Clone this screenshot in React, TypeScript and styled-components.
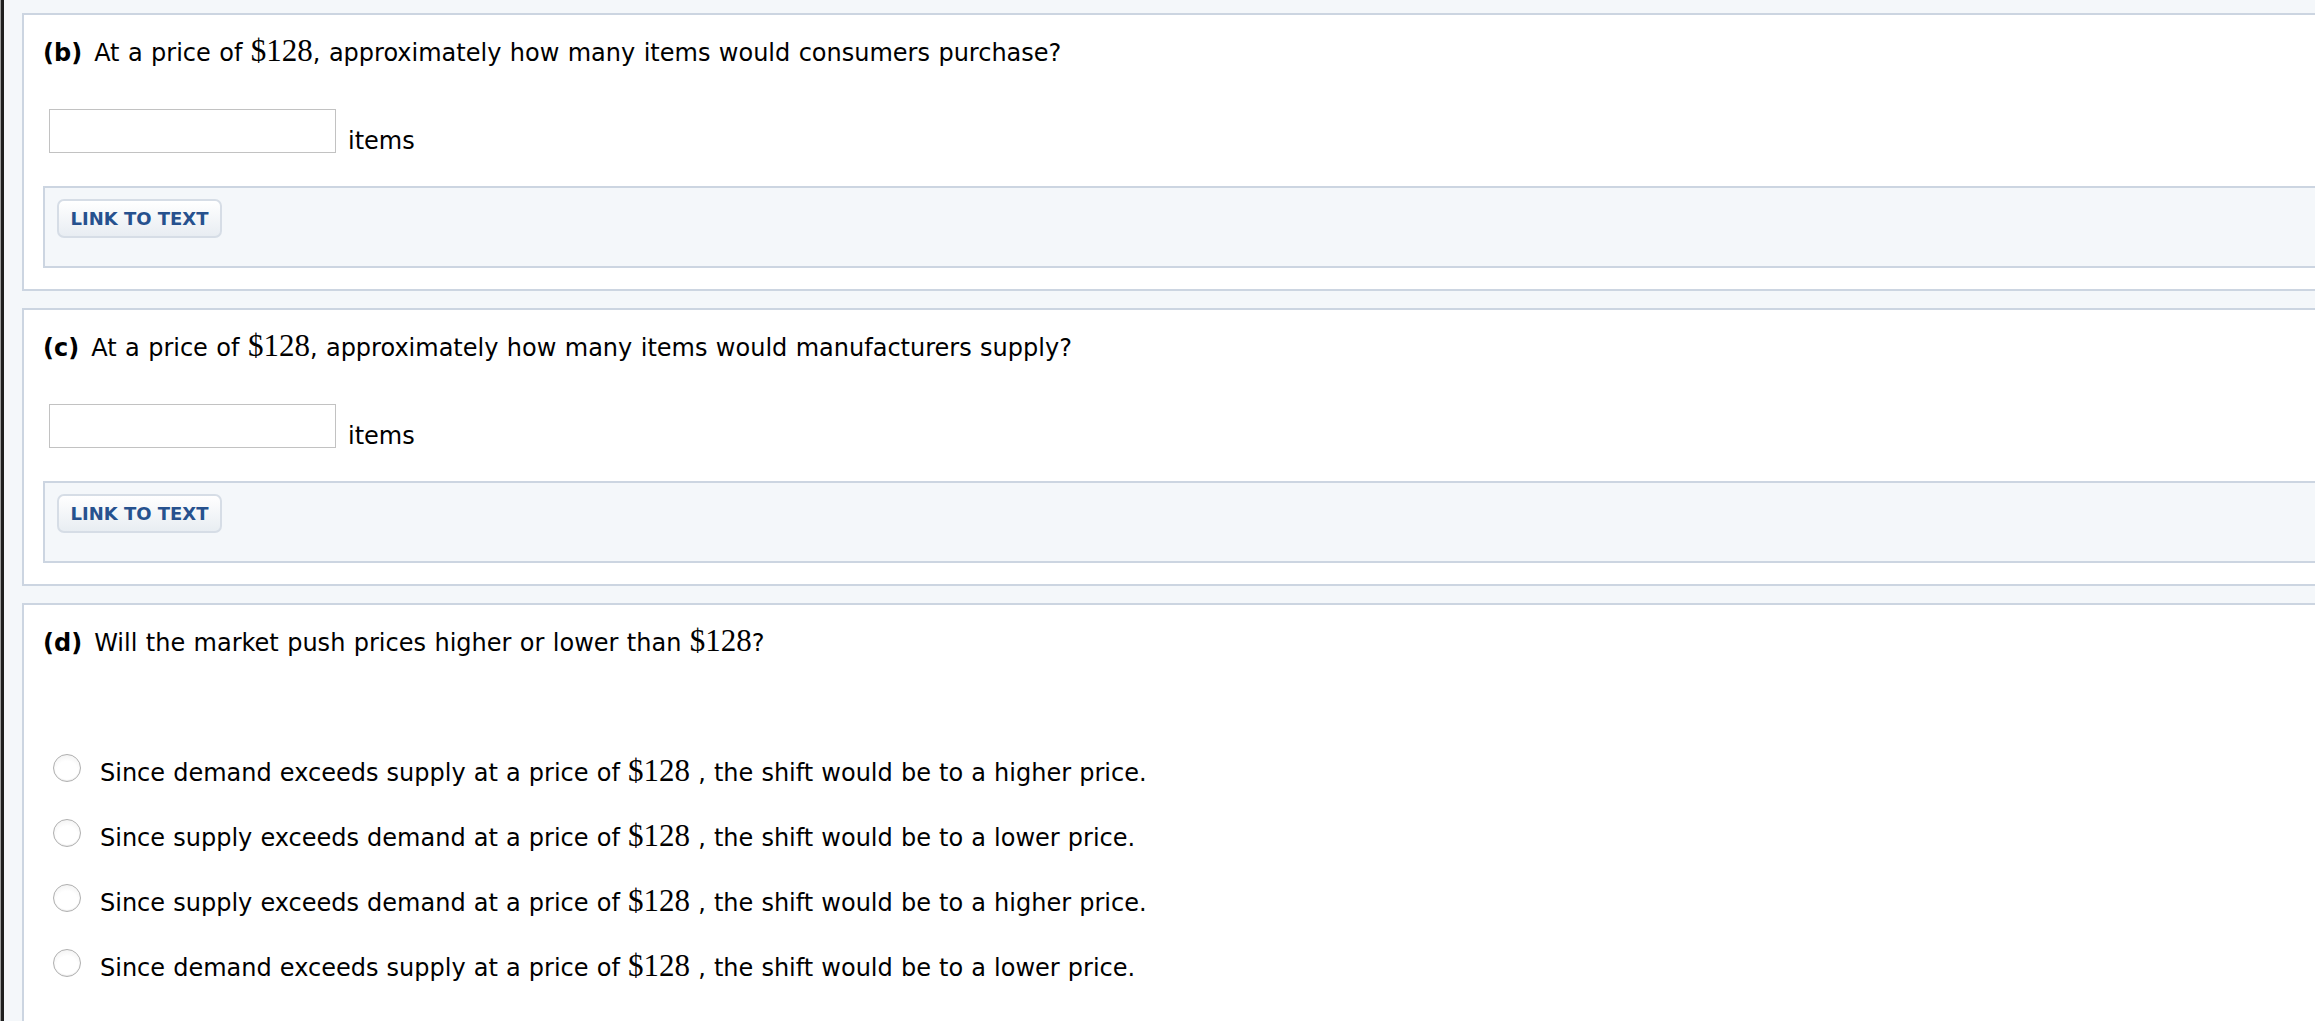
import React from "react";
import styled, { createGlobalStyle } from "styled-components";

const GlobalStyle = createGlobalStyle`
  html, body {
    margin: 0;
    padding: 0;
    background: #9c9c9c;
  }
  body {
    font-family: "DejaVu Sans", Verdana, sans-serif;
    color: #000;
  }
`;

const options = [
  { first: "Since demand exceeds supply at a price of", last: ", the shift would be to a higher price." },
  { first: "Since supply exceeds demand at a price of", last: ", the shift would be to a lower price." },
  { first: "Since supply exceeds demand at a price of", last: ", the shift would be to a higher price." },
  { first: "Since demand exceeds supply at a price of", last: ", the shift would be to a lower price." },
];

const Price = () => <Money>$128</Money>;

const NumericPart = ({ letter, verb }: { letter: string; verb: string }) => (
  <Card>
    <Question>
      <Letter>({letter})</Letter>At a price of <Price />, approximately how many items would {verb}?
    </Question>
    <AnswerRow>
      <NumberInput type="text" />
      <Unit>items</Unit>
    </AnswerRow>
    <LinkBox>
      <LinkButton type="button">LINK TO TEXT</LinkButton>
    </LinkBox>
  </Card>
);

const App = () => {
  return (
    <>
      <GlobalStyle />
      <Page>
        <NumericPart letter="b" verb="consumers purchase" />
        <NumericPart letter="c" verb="manufacturers supply" />
        <Card>
          <Question>
            <Letter>(d)</Letter>Will the market push prices higher or lower than <Price />?
          </Question>
          <OptionList>
            {options.map((o, i) => (
              <Option key={i}>
                <Radio type="radio" name="part-d" />
                <OptionText>
                  {o.first} <Price /> {o.last}
                </OptionText>
              </Option>
            ))}
          </OptionList>
        </Card>
      </Page>
    </>
  );
};

const Money = styled.span`
  font-family: "Liberation Serif", "Times New Roman", serif;
  font-size: 31px;
  line-height: 0;
  word-spacing: 0;
`;

const Letter = styled.b`
  font-weight: bold;
  margin-right: 12px;
`;

const Question = styled.div`
  margin-top: 23px;
  font-size: 24px;
  line-height: 30px;
  word-spacing: 0.8px;
  white-space: nowrap;
`;

const AnswerRow = styled.div`
  display: flex;
  align-items: flex-end;
  margin-top: 41px;
  padding-left: 6px;
`;

const NumberInput = styled.input`
  box-sizing: border-box;
  width: 287px;
  height: 44px;
  margin: 0;
  border: 1px solid #c2c2c2;
  background: #fff;
  font-family: "DejaVu Sans", Verdana, sans-serif;
  font-size: 24px;
`;

const Unit = styled.span`
  margin-left: 12px;
  font-size: 24px;
  line-height: 24px;
`;

const LinkBox = styled.div`
  margin-top: 33px;
  padding: 11px 0 28px 12px;
  border: 2px solid #ccd5e1;
  border-right: none;
  background: #f4f7fa;
`;

const LinkButton = styled.button`
  box-sizing: border-box;
  width: 165px;
  height: 39px;
  padding: 0;
  border: 2px solid #d6dde6;
  border-radius: 7px;
  background: linear-gradient(#ffffff, #e8edf2);
  color: #26518e;
  font-family: "DejaVu Sans", Verdana, sans-serif;
  font-weight: bold;
  font-size: 18px;
  cursor: pointer;
`;

const OptionList = styled.div`
  display: flex;
  flex-direction: column;
  margin-top: 82px;
`;

const Option = styled.label`
  display: flex;
  align-items: center;
  height: 65px;
  padding-left: 10px;
`;

const Radio = styled.input`
  appearance: none;
  box-sizing: border-box;
  width: 28px;
  height: 28px;
  margin: -10px 19px 0 0;
  border: 1px solid #b0b0b0;
  border-radius: 50%;
  background: radial-gradient(circle at 50% 65%, #ffffff 50%, #ececec 100%);
  box-shadow: inset 0 -1px 1px rgba(0, 0, 0, 0.08);
`;

const OptionText = styled.span`
  font-size: 24px;
  line-height: 30px;
  word-spacing: 0.5px;
  white-space: nowrap;
`;

const Card = styled.section`
  margin-right: -40px;
  padding: 0 0 21px 19px;
  border: 2px solid #ccd5e1;
  background: #fff;
`;

const Page = styled.main`
  box-sizing: border-box;
  display: flex;
  flex-direction: column;
  gap: 17px;
  min-height: 100vh;
  margin-left: 1px;
  padding: 13px 0 0 18px;
  border-left: 3px solid #1e1e1e;
  background: #f4f7fa;
  overflow: hidden;
`;

export default App;
